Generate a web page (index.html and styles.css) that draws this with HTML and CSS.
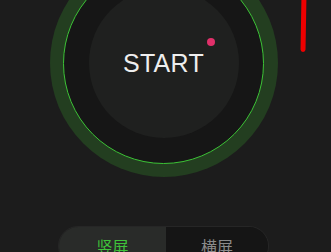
FILE: index.html
```html
<!DOCTYPE html>
<html lang="zh">
<head>
    <meta charset="UTF-8">
    <meta name="viewport" content="width=device-width, initial-scale=1.0">
    <title>Start</title>
    <link rel="stylesheet" href="styles.css">
</head>
<body>
    <div class="screen">
        <div class="dial">
            <div class="ring">
                <div class="face">
                    <span class="start-label">START</span>
                    <span class="dot"></span>
                </div>
            </div>
        </div>

        <div class="orient">
            <div class="orient-btn active">竖屏</div>
            <div class="orient-btn">横屏</div>
        </div>

        <div class="marker"></div>
    </div>
</body>
</html>
```

FILE: styles.css
```css
html, body {
    margin: 0;
    height: 100%;
    background-color: #1c1c1c;
    overflow: hidden;
}

.screen {
    position: relative;
    height: 100%;
    display: flex;
    flex-direction: column;
    align-items: center;
    font-family: "Liberation Sans", "Noto Sans CJK SC", sans-serif;
}

.dial {
    margin-top: -51px;
    margin-left: -4px;
    width: 228px;
    height: 228px;
    border-radius: 50%;
    background-color: #233e20;
    display: flex;
    justify-content: center;
    align-items: center;
    flex-shrink: 0;
}

.ring {
    width: 199px;
    height: 199px;
    border-radius: 50%;
    border: 1.5px solid #3cc236;
    background-color: #161616;
    display: flex;
    justify-content: center;
    align-items: center;
}

.face {
    position: relative;
    width: 150px;
    height: 150px;
    border-radius: 50%;
    background-color: #1f201f;
    display: flex;
    justify-content: center;
    align-items: center;
}

.start-label {
    color: #eeeeee;
    font-size: 25px;
    line-height: 1;
    letter-spacing: 0.3px;
}

.dot {
    position: absolute;
    left: 118px;
    top: 50px;
    width: 8px;
    height: 8px;
    border-radius: 50%;
    background-color: #e0306a;
}

.orient {
    margin-top: 49px;
    margin-left: -4px;
    width: 211px;
    height: 40px;
    border: 1px solid #262626;
    border-radius: 20px;
    overflow: hidden;
    display: grid;
    grid-template-columns: 107px 1fr;
    flex-shrink: 0;
    box-sizing: border-box;
}

.orient-btn {
    display: flex;
    justify-content: center;
    align-items: center;
    background-color: #151515;
    color: #8a8a8a;
    font-family: "Noto Sans CJK SC", sans-serif;
    font-size: 16px;
}

.orient-btn.active {
    background-color: #292b29;
    color: #3fc23a;
}

.marker {
    position: absolute;
    left: 301px;
    top: -6px;
    width: 5px;
    height: 58px;
    border-radius: 3px;
    background-color: #ee0000;
    transform: rotate(1deg);
}
```
